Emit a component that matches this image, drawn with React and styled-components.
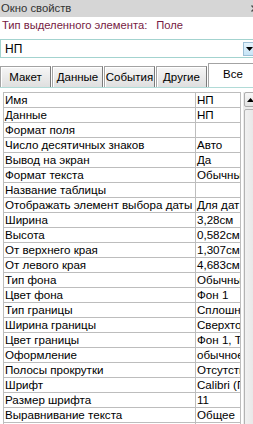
import React from 'react';
import styled, { createGlobalStyle } from 'styled-components';

const GlobalStyle = createGlobalStyle`
  html, body {
    margin: 0;
    padding: 0;
    background: #ffffff;
    overflow: hidden;
  }
  body {
    font-family: "Liberation Sans", Arial, sans-serif;
  }
`;

const Window = styled.div`
  width: 258px;
  height: 424px;
  background: #ffffff;
  overflow: hidden;
`;

const TitleBar = styled.div`
  height: 17px;
  background: #d6d6d6;
  display: flex;
  align-items: center;
  justify-content: space-between;
  padding-left: 1px;
`;

const TitleText = styled.span`
  font-size: 11.3px;
  line-height: 17px;
  color: #333333;
`;

const Close = styled.svg`
  width: 7px;
  height: 7px;
  margin-top: -1px;
`;

const SelType = styled.div`
  height: 17px;
  line-height: 17px;
  padding-left: 2px;
  font-size: 11.2px;
  color: #761a42;
  white-space: nowrap;
`;

const SelValue = styled.span`
  margin-left: 9px;
`;

const Combo = styled.div`
  margin-top: 5px;
  height: 19px;
  box-sizing: border-box;
  border: 1px solid #a3d3cf;
  display: flex;
  align-items: center;
  justify-content: space-between;
  padding: 0 1px 0 4px;
`;

const ComboText = styled.span`
  font-size: 12px;
  color: #000;
`;

const DropBtn = styled.div`
  width: 13px;
  height: 14px;
  box-sizing: border-box;
  border: 1px solid #9cbfd6;
  background: linear-gradient(#e4f3fc, #c6e4f6);
  display: flex;
  align-items: center;
  justify-content: center;
`;

const TabStrip = styled.div`
  margin-top: 5px;
  height: 24px;
  display: flex;
  align-items: flex-end;
  gap: 1px;
`;

const Tab = styled.div`
  box-sizing: border-box;
  width: ${p => (p.$active ? '50px' : '51px')};
  height: ${p => (p.$active ? '24px' : '21px')};
  display: flex;
  align-items: center;
  justify-content: center;
  padding-bottom: ${p => (p.$active ? '4px' : '0')};
  font-size: 11.5px;
  color: #000;
  border: 1px solid #a3a3a3;
  border-bottom: none;
  border-right-color: ${p => (p.$active ? '#a3a3a3' : '#7b7b7b')};
  background: ${p => (p.$active ? '#ffffff' : 'linear-gradient(#f6f6f6, #dfdfdf)')};
  box-shadow: ${p => (p.$active ? 'none' : 'inset 1px 1px 0 #ffffff')};
  white-space: nowrap;
`;

const Pane = styled.div`
  border-top: 1px solid #b1dbd7;
  padding-top: 4px;
  display: flex;
  align-items: flex-start;
`;

const Grid = styled.div`
  margin-left: 3px;
  width: 238px;
  box-sizing: border-box;
  border-left: 1px solid #bdbdbd;
  border-top: 1px solid #bdbdbd;
  display: grid;
  grid-template-columns: 192px 45px;
`;

const Cell = styled.div`
  box-sizing: border-box;
  height: 15px;
  line-height: 14px;
  padding-left: 1px;
  border-right: 1px solid #bdbdbd;
  border-bottom: 1px solid #bdbdbd;
  font-size: 11.6px;
  color: #000;
  white-space: nowrap;
  overflow: hidden;
`;

const ScrollBar = styled.div`
  margin-left: 2px;
  width: 15px;
  height: 340px;
  background: #ececec;
  display: flex;
  flex-direction: column;
  gap: 2px;
  padding-left: 1px;
`;

const ScrollBtn = styled.div`
  height: 15px;
  box-sizing: border-box;
  border: 1px solid #adadad;
  border-radius: 2px;
  background: linear-gradient(#f7f7f7, #e3e3e3);
  display: flex;
  align-items: center;
  justify-content: center;
  padding-right: 2px;
`;

const Thumb = styled.div`
  flex: 1;
  box-sizing: border-box;
  border: 1px solid #b3b3b3;
  border-radius: 2px;
  background: linear-gradient(90deg, #f1f1f1, #e4e4e4);
`;

const tabs = ['Макет', 'Данные', 'События', 'Другие', 'Все'];

const props = [
  ['Имя', 'НП'],
  ['Данные', 'НП'],
  ['Формат поля', ''],
  ['Число десятичных знаков', 'Авто'],
  ['Вывод на экран', 'Да'],
  ['Формат текста', 'Обычный текст'],
  ['Название таблицы', ''],
  ['Отображать элемент выбора даты', 'Для дат'],
  ['Ширина', '3,28см'],
  ['Высота', '0,582см'],
  ['От верхнего края', '1,307см'],
  ['От левого края', '4,683см'],
  ['Тип фона', 'Обычный'],
  ['Цвет фона', 'Фон 1'],
  ['Тип границы', 'Сплошная'],
  ['Ширина границы', 'Сверхтонкая'],
  ['Цвет границы', 'Фон 1, Темнее 35%'],
  ['Оформление', 'обычное'],
  ['Полосы прокрутки', 'Отсутствуют'],
  ['Шрифт', 'Calibri (Подробный)'],
  ['Размер шрифта', '11'],
  ['Выравнивание текста', 'Общее'],
  ['Толщина шрифта', 'Обычный'],
];

const App = () => {
  return (
    <>
      <GlobalStyle />
      <Window>
        <TitleBar>
          <TitleText>Окно свойств</TitleText>
          <Close viewBox="0 0 7 7">
            <path d="M0.5 0.5 L6.5 6.5 M6.5 0.5 L0.5 6.5" stroke="#4a4a4a" strokeWidth="1.4" />
          </Close>
        </TitleBar>
        <SelType>
          Тип выделенного элемента:<SelValue>Поле</SelValue>
        </SelType>
        <Combo>
          <ComboText>НП</ComboText>
          <DropBtn>
            <svg width="7" height="4" viewBox="0 0 7 4">
              <path d="M0 0 H7 L3.5 4 Z" fill="#000" />
            </svg>
          </DropBtn>
        </Combo>
        <TabStrip>
          {tabs.map(t => (
            <Tab key={t} $active={t === 'Все'}>{t}</Tab>
          ))}
        </TabStrip>
        <Pane>
          <Grid>
            {props.map(([name, value]) => (
              <React.Fragment key={name}>
                <Cell>{name}</Cell>
                <Cell $value>{value}</Cell>
              </React.Fragment>
            ))}
          </Grid>
          <ScrollBar>
            <ScrollBtn>
              <svg width="7" height="4" viewBox="0 0 7 4">
                <path d="M0 4 H7 L3.5 0 Z" fill="#000" />
              </svg>
            </ScrollBtn>
            <Thumb />
          </ScrollBar>
        </Pane>
      </Window>
    </>
  );
};

export default App;
